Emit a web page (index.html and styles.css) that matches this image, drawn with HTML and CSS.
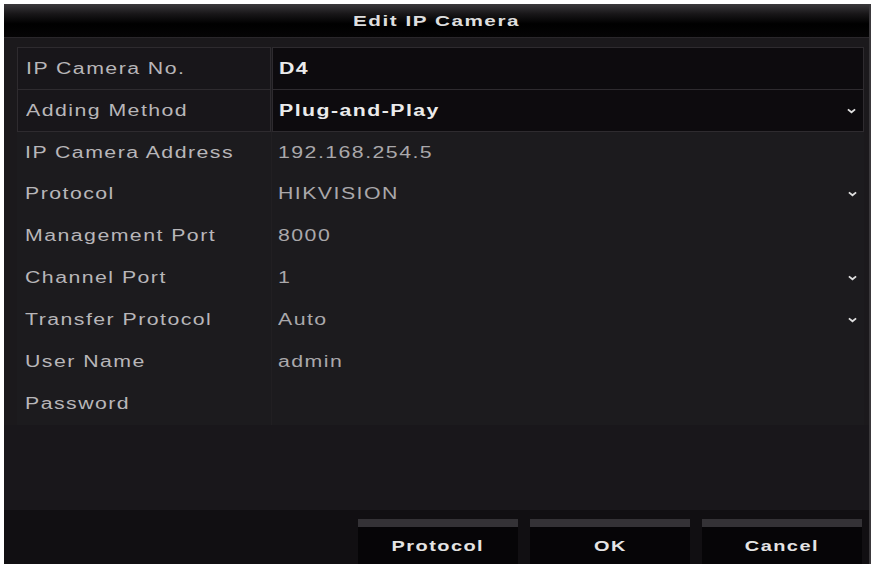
FILE: index.html
```html
<!DOCTYPE html>
<html>
<head>
<meta charset="utf-8">
<link rel="stylesheet" href="styles.css">
</head>
<body>
<div class="dialog">
  <div class="titlebar"><span class="t tc">Edit IP Camera</span></div>
  <div class="form">
    <div class="row edit">
      <div class="label"><span class="t">IP Camera No.</span></div>
      <div class="value strong"><span class="t">D4</span></div>
    </div>
    <div class="row edit">
      <div class="label"><span class="t">Adding Method</span></div>
      <div class="value strong"><span class="t">Plug-and-Play</span><svg class="chev" viewBox="0 0 10 6"><path d="M1 1.2L5 4.4L9 1.2"/></svg></div>
    </div>
    <div class="row">
      <div class="label"><span class="t">IP Camera Address</span></div>
      <div class="value"><span class="t">192.168.254.5</span></div>
    </div>
    <div class="row">
      <div class="label"><span class="t">Protocol</span></div>
      <div class="value"><span class="t">HIKVISION</span><svg class="chev" viewBox="0 0 10 6"><path d="M1 1.2L5 4.4L9 1.2"/></svg></div>
    </div>
    <div class="row">
      <div class="label"><span class="t">Management Port</span></div>
      <div class="value"><span class="t">8000</span></div>
    </div>
    <div class="row">
      <div class="label"><span class="t">Channel Port</span></div>
      <div class="value"><span class="t">1</span><svg class="chev" viewBox="0 0 10 6"><path d="M1 1.2L5 4.4L9 1.2"/></svg></div>
    </div>
    <div class="row">
      <div class="label"><span class="t">Transfer Protocol</span></div>
      <div class="value"><span class="t">Auto</span><svg class="chev" viewBox="0 0 10 6"><path d="M1 1.2L5 4.4L9 1.2"/></svg></div>
    </div>
    <div class="row">
      <div class="label"><span class="t">User Name</span></div>
      <div class="value"><span class="t">admin</span></div>
    </div>
    <div class="row">
      <div class="label"><span class="t">Password</span></div>
      <div class="value"></div>
    </div>
  </div>
  <div class="spacer"></div>
  <div class="footer">
    <div class="btn"><span class="t tc">Protocol</span></div>
    <div class="btn"><span class="t tc">OK</span></div>
    <div class="btn"><span class="t tc">Cancel</span></div>
  </div>
</div>
</body>
</html>
```

FILE: styles.css
```css
html, body {
  margin: 0;
  padding: 0;
  background: #ffffff;
}
body {
  width: 871px;
  height: 564px;
  overflow: hidden;
  font-family: "Liberation Sans", Arial, sans-serif;
}
.dialog {
  margin: 4px 0 0 4px;
  width: 865px;
  height: 560px;
  border-right: 2px solid #3a383b;
  background: #1b191c;
  display: flex;
  flex-direction: column;
}
.t {
  display: inline-block;
  transform: scaleX(1.33);
  transform-origin: left center;
  letter-spacing: 1.1px;
  white-space: nowrap;
}
.t.tc {
  transform-origin: center center;
}
.titlebar {
  height: 33px;
  flex: none;
  background: linear-gradient(#3a383b 0%, #181618 30%, #000000 60%, #050405 100%);
  border-bottom: 1px solid #2a272b;
  display: flex;
  align-items: center;
  justify-content: center;
  color: #dedede;
  font-size: 15px;
  font-weight: bold;
}
.titlebar .t {
  transform: scaleX(1.38);
}
.form {
  margin: 9px 5px 0 13px;
  display: flex;
  flex-direction: column;
  background: #1c1b1e;
}
.row {
  height: 42px;
  display: grid;
  grid-template-columns: 254px 1fr;
}
.label, .value {
  display: flex;
  align-items: center;
  font-size: 16px;
}
.label {
  padding-left: 8px;
  color: #b8b6b9;
}
.value {
  padding-left: 6px;
  padding-right: 7px;
  color: #aaa8ab;
  border-left: 1px solid #211f22;
  justify-content: space-between;
}
.row.edit .label {
  background: #18161a;
  border: 1px solid #2e2b2f;
  border-bottom: none;
}
.row.edit .value {
  background: #0d0b0e;
  border: 1px solid #2e2b2f;
  border-bottom: none;
  margin-left: 1px;
}
.row.edit + .row .label,
.row.edit + .row .value {
  border-top: 1px solid #2e2b2f;
}
.value.strong {
  color: #ebebeb;
  font-weight: bold;
}
.chev {
  width: 9px;
  height: 6px;
  flex: none;
}
.chev path {
  fill: none;
  stroke: #e0e0e0;
  stroke-width: 2;
}
.spacer {
  flex: 1;
  background: #19171b;
}
.footer {
  height: 54px;
  flex: none;
  background: #110f12;
  display: flex;
  justify-content: flex-end;
  align-items: flex-end;
  gap: 12px;
  padding-right: 7px;
}
.btn {
  width: 160px;
  height: 45px;
  box-sizing: border-box;
  border-top: 8px solid #343236;
  background: #060507;
  color: #e4e4e4;
  font-size: 15px;
  font-weight: bold;
  display: flex;
  align-items: center;
  justify-content: center;
}
```
